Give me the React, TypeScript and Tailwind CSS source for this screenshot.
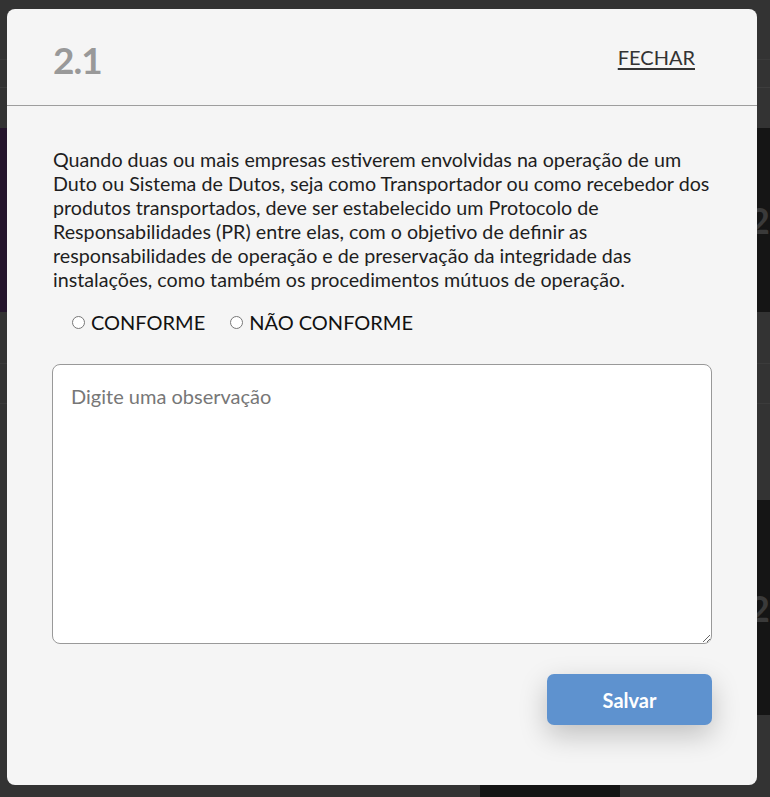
import React from "react";

export default function App() {
  return (
    <div className="relative w-full h-[797px] overflow-hidden bg-[#333333]" style={{ fontFamily: "Lato, 'Noto Sans', sans-serif" }}>
      {/* background page (dimmed) */}
      <div className="flex flex-col h-full">
        <div className="h-[128px] flex flex-col">
          <div className="h-[60px] border-b border-[#3a3a3a]" />
          <div className="h-[28px] border-b border-[#3d3d3d]" />
        </div>
        <div className="h-[184px] flex justify-between">
          <div className="w-[380px] bg-[#24152b]" />
          <div className="w-[380px] bg-[#151515] flex items-center justify-end pr-0 text-[#3a3a3a] text-[36px] font-bold">2</div>
        </div>
        <div className="h-[188px] flex flex-col">
          <div className="h-[52px] border-b border-[#3b3b3b]" />
          <div className="h-[40px] border-b border-[#3b3b3b]" />
        </div>
        <div className="h-[215px] flex justify-end">
          <div className="w-[380px] bg-[#151515] flex items-center justify-end text-[#3a3a3a] text-[36px] font-bold">2</div>
        </div>
        <div className="flex-1 flex">
          <div className="ml-[480px] w-[140px] bg-[#141414]" />
        </div>
      </div>

      {/* modal */}
      <div className="absolute left-[7px] top-[9px] w-[750px] h-[776px] rounded-lg bg-[#f5f5f5] flex flex-col">
        <div className="h-[96px] flex items-center justify-between pl-[46px] pr-[62px] border-b border-[#9e9e9e] box-content">
          <span className="text-[37px] font-bold text-[#999999] leading-none tracking-[-1px] mt-[4px]">2.1</span>
          <span className="text-[20px] text-[#333333] underline underline-offset-[3px] decoration-[1.5px]">FECHAR</span>
        </div>
        <div className="px-[45px] pt-[42px] flex flex-col">
          <p className="text-[19.7px] leading-[24px] text-[#1e1e1e] pl-[1px] w-[666px]">
            Quando duas ou mais empresas estiverem envolvidas na operação de um Duto ou Sistema de Dutos, seja como Transportador ou como recebedor dos produtos transportados, deve ser estabelecido um Protocolo de Responsabilidades (PR) entre elas, com o objetivo de definir as responsabilidades de operação e de preservação da integridade das instalações, como também os procedimentos mútuos de operação.
          </p>
          <div className="flex items-center gap-[25px] pl-[20px] mt-[18px] h-[24px] text-[20px] text-[#111111]">
            <label className="flex items-center gap-[6px]">
              <input type="radio" name="c" className="w-[13px] h-[13px] m-0" />
              <span>CONFORME</span>
            </label>
            <label className="flex items-center gap-[6px]">
              <input type="radio" name="c" className="w-[13px] h-[13px] m-0" />
              <span>NÃO CONFORME</span>
            </label>
          </div>
          <textarea
            placeholder="Digite uma observação"
            className="mt-[30px] w-[660px] h-[280px] rounded-lg border border-[#999999] bg-white px-[18px] pt-[19px] pb-[20px] text-[20px] leading-[24px] text-[#222] placeholder:text-[#777777] outline-none"
          />
          <div className="flex justify-end mt-[30px]">
            <button className="w-[165px] h-[51px] rounded-[7px] bg-[#5e92cf] text-white text-[20px] font-bold shadow-[0_10px_28px_rgba(0,0,0,0.22)]">
              Salvar
            </button>
          </div>
        </div>
      </div>
    </div>
  );
}
